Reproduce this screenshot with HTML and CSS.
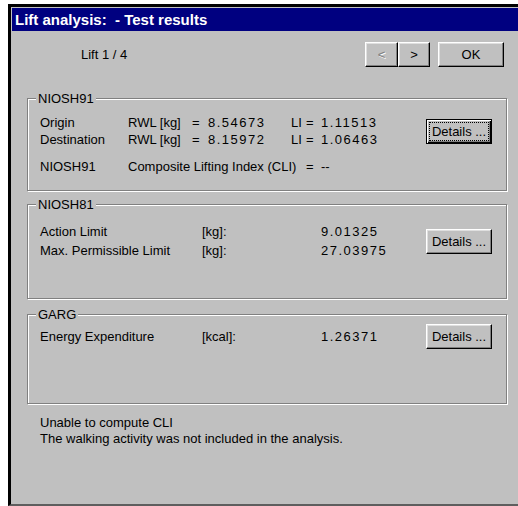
FILE: index.html
```html
<!DOCTYPE html>
<html lang="en">
<head>
<meta charset="utf-8">
<title>Lift analysis - Test results</title>
<link rel="stylesheet" href="styles.css">
</head>
<body>
<div class="window">
  <div class="titlebar">Lift analysis:&nbsp; - Test results</div>
  <div class="content">
    <div class="toprow">
      <span class="lift-count">Lift 1 / 4</span>
      <div class="nav">
        <button class="btn nav-btn" disabled>&lt;</button>
        <button class="btn nav-btn">&gt;</button>
      </div>
      <button class="btn ok-btn">OK</button>
    </div>

    <div class="group niosh91">
      <span class="legend">NIOSH91</span>
      <div class="grid rows-17">
        <span class="c1">Origin</span>
        <span class="c2"><span class="rwl">RWL [kg]</span><span class="eq">=</span><span class="num">8.54673</span></span>
        <span class="c4">LI</span><span class="c5">=</span><span class="c6 num">1.11513</span>
        <button class="btn default c7 span2"><span class="focus">Details ...</span></button>
        <span class="c1">Destination</span>
        <span class="c2"><span class="rwl">RWL [kg]</span><span class="eq">=</span><span class="num">8.15972</span></span>
        <span class="c4">LI</span><span class="c5">=</span><span class="c6 num">1.06463</span>
      </div>
      <div class="grid rows-17 cli">
        <span class="c1">NIOSH91</span>
        <span class="c2-4">Composite Lifting Index (CLI)</span>
        <span class="c5">=</span><span class="c6">--</span>
      </div>
    </div>

    <div class="group niosh81">
      <span class="legend">NIOSH81</span>
      <div class="grid rows-19">
        <span class="c1-2">Action Limit</span>
        <span class="c3">[kg]:</span>
        <span class="c6 num">9.01325</span>
        <button class="btn c7 span2">Details ...</button>
        <span class="c1-2">Max. Permissible Limit</span>
        <span class="c3">[kg]:</span>
        <span class="c6 num">27.03975</span>
      </div>
    </div>

    <div class="group garg">
      <span class="legend">GARG</span>
      <div class="grid rows-25">
        <span class="c1-2">Energy Expenditure</span>
        <span class="c3">[kcal]:</span>
        <span class="c6 num">1.26371</span>
        <button class="btn c7">Details ...</button>
      </div>
    </div>

    <div class="notes">
      <div>Unable to compute CLI</div>
      <div>The walking activity was not included in the analysis.</div>
    </div>
  </div>
</div>
</body>
</html>
```

FILE: styles.css
```css
html, body {
  margin: 0;
  padding: 0;
  background: #ffffff;
  overflow: hidden;
}

body {
  font-family: "Liberation Sans", Arial, sans-serif;
  font-size: 13px;
  color: #000;
}

/* dialog frame */
.window {
  box-sizing: border-box;
  margin: 4px 0 0 8px;
  width: 510px;
  height: 502px;
  border-left: 3px solid #000;
  border-top: 3px solid #000;
  border-bottom: 2px solid #5e5e5e;
  padding: 1px 0 0 1px;
  background: #c0c0c0;
  overflow: hidden;
}

.titlebar {
  height: 23px;
  line-height: 23px;
  background: #000080;
  color: #fff;
  font-weight: bold;
  font-size: 15px;
  padding-left: 3px;
  white-space: nowrap;
}

.content {
  padding: 11px 14px 0 0;
}

/* lift counter + navigation */
.toprow {
  display: flex;
  align-items: center;
  height: 25px;
}

.lift-count {
  margin-left: 69px;
}

.nav {
  display: flex;
  margin-left: auto;
}

.btn {
  box-sizing: border-box;
  height: 25px;
  padding: 0;
  margin: 0;
  font-family: "Liberation Sans", Arial, sans-serif;
  font-size: 13px;
  color: #000;
  background: #c0c0c0;
  border: 1px solid;
  border-color: #fff #000 #000 #fff;
  box-shadow: inset -1px -1px 0 #808080, inset 1px 1px 0 #dfdfdf;
  text-align: center;
}

.btn:disabled {
  color: #808080;
  text-shadow: 1px 1px 0 #fff;
}

.nav-btn {
  width: 33px;
}

.nav-btn + .nav-btn {
  width: 32px;
}

.ok-btn {
  width: 66px;
  margin-left: 8px;
}

.btn.default {
  border: 1px solid #000;
  box-shadow: inset 1px 1px 0 #fff, inset -1px -1px 0 #000, inset -2px -2px 0 #808080;
}

.focus {
  outline: 1px dotted #000;
  outline-offset: 1px;
  padding: 0 1px;
}

/* etched group boxes */
.group {
  position: relative;
  margin-left: 15px;
  width: 480px;
  box-sizing: border-box;
  border: 1px solid #808080;
  box-shadow: 1px 1px 0 #fff, inset 1px 1px 0 #fff;
  padding-left: 12px;
}

.legend {
  position: absolute;
  top: -8px;
  left: 8px;
  padding: 0 2px;
  line-height: 15px;
  background: #c0c0c0;
}

.niosh91 {
  margin-top: 31px;
  padding-top: 15px;
  padding-bottom: 15px;
}

.niosh81 {
  margin-top: 13px;
  padding-top: 17px;
  padding-bottom: 38px;
}

.garg {
  margin-top: 15px;
  padding-top: 9px;
  padding-bottom: 54px;
}

.grid {
  display: grid;
  grid-template-columns: 88px 74px 89px 15px 15px 105px 66px;
  align-items: center;
  white-space: nowrap;
}

.rows-17 { grid-auto-rows: 17px; line-height: 17px; }
.rows-19 { grid-auto-rows: 19px; line-height: 19px; }
.rows-25 { grid-auto-rows: 25px; line-height: 19px; }

.cli {
  margin-top: 10px;
}

.c1 { grid-column: 1; }
.c1-2 { grid-column: 1 / 3; }
.c2 { grid-column: 2 / 4; }
.c2-4 { grid-column: 2 / 5; }
.c3 { grid-column: 3; }
.c4 { grid-column: 4; }
.c5 { grid-column: 5; }
.c6 { grid-column: 6; }
.c7 { grid-column: 7; width: 66px; }
.span2 { grid-row: span 2; }

.rwl {
  display: inline-block;
  width: 64px;
}

.eq {
  display: inline-block;
  width: 16px;
}

.num {
  letter-spacing: 1.5px;
}

.notes {
  margin: 11px 0 0 28px;
  line-height: 16px;
}
```
